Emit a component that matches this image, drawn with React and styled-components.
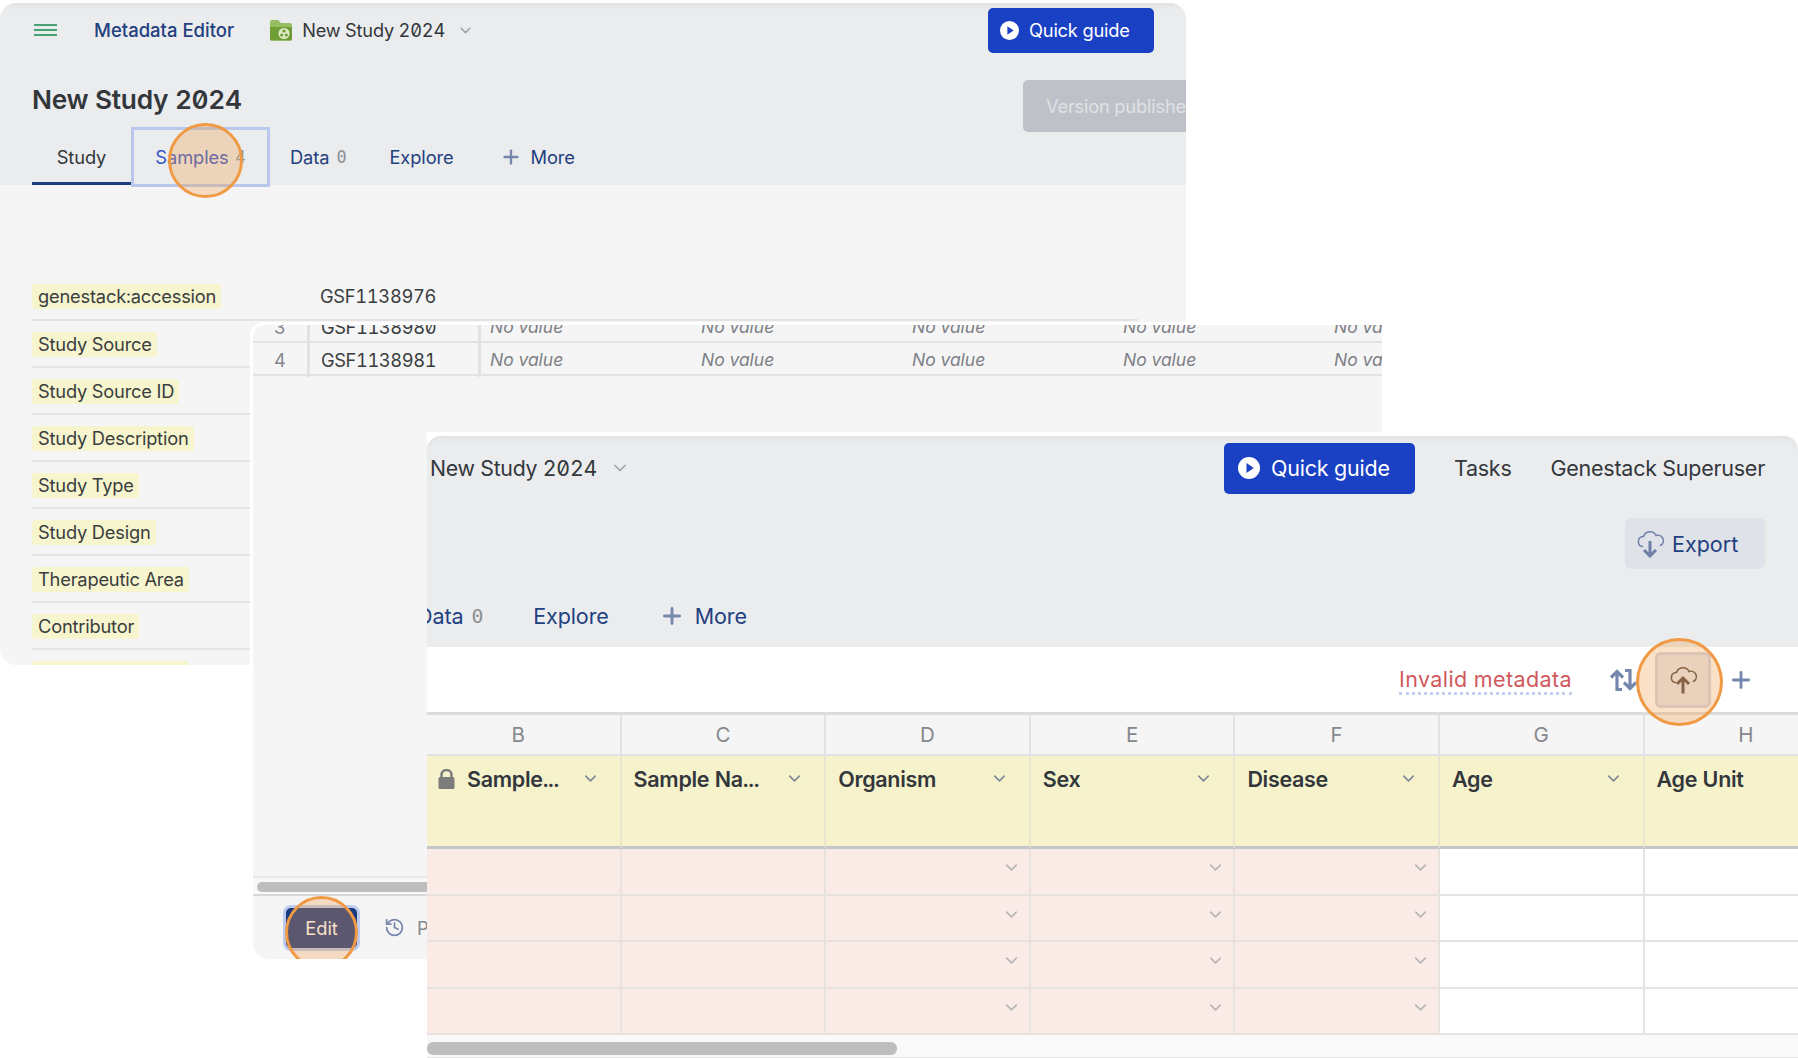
import React from "react";
import styled, { createGlobalStyle } from "styled-components";
import { ChevronDown, History, Plus } from "lucide-react";

const Global = createGlobalStyle`
  html, body { margin: 0; padding: 0; background: #fff; }
  body { font-family: "Inter", "Roboto", "Liberation Sans", sans-serif; font-feature-settings: "zero" 1, "tnum" 1; color: #33373c; }
  * { box-sizing: border-box; }
`;

const Desktop = styled.div`
  position: relative;
  width: 1798px;
  height: 1058px;
  overflow: hidden;
  background: #fff;
`;

/* Window 1: study page */
const StudyWindow = styled.section`
  position: absolute;
  left: 0;
  top: 3px;
  width: 1186px;
  height: 662px;
  border-radius: 16px;
  overflow: hidden;
  background: #f5f5f5;
  font-size: 18.3px;
`;
const GrayHeader = styled.header`
  display: flex;
  flex-direction: column;
  background: #ebecee;
  box-shadow: inset 0 7px 7px -5px rgba(0, 0, 0, 0.06);
  height: ${(p) => p.$h}px;
  flex-shrink: 0;
`;
const TopBar = styled.div`
  display: flex;
  align-items: center;
  height: 54px;
  padding: 0 32px 0 34px;
`;
const Burger = styled.div`
  display: flex;
  flex-direction: column;
  justify-content: space-between;
  width: 23px;
  height: 13px;
  margin-right: 37px;
  & > i { display: block; height: 2.4px; background: #46a275; }
`;
const AppName = styled.span`
  color: #23407f;
  font-weight: 500;
  font-size: 18.5px;
  margin-right: 35px;
`;
const StudyName = styled.span`
  color: #33373c;
  font-size: ${(p) => p.$size || 18.2}px;
  margin-left: ${(p) => p.$left || 9}px;
  letter-spacing: ${(p) => p.$track || -0.2}px;
`;
const Caret = styled(ChevronDown)`
  color: #9ea2a8;
  margin-left: ${(p) => p.$left || 12}px;
  flex-shrink: 0;
`;
const GuideButton = styled.button`
  display: flex;
  align-items: center;
  gap: ${(p) => p.$gap}px;
  margin-left: auto;
  width: ${(p) => p.$w}px;
  height: ${(p) => p.$h}px;
  padding: 0 0 0 ${(p) => p.$pad}px;
  background: #1a40c4;
  color: #fff;
  border: 0;
  border-radius: 5px;
  font: inherit;
  font-size: ${(p) => p.$size}px;
  letter-spacing: -0.2px;
`;
const TitleRow = styled.div`
  display: flex;
  justify-content: space-between;
  align-items: flex-start;
  height: 47px;
  margin-top: 23px;
  padding-left: 32px;
`;
const Title = styled.h1`
  margin: 0;
  font-size: 26.3px;
  line-height: 40px;
  font-weight: 600;
  color: #33373c;
  letter-spacing: -0.3px;
`;
const PublishedButton = styled.div`
  flex: 0 0 180px;
  height: 52px;
  margin-right: -17px;
  padding-left: 23px;
  line-height: 52px;
  background: #bec1c8;
  color: #dfe1e5;
  border-radius: 5px;
  font-size: 18.3px;
  white-space: nowrap;
  letter-spacing: -0.2px;
`;
const Tabs = styled.nav`
  display: flex;
  height: ${(p) => p.$h}px;
  margin-top: ${(p) => p.$top || 0}px;
  padding-left: ${(p) => p.$left}px;
  margin-left: ${(p) => p.$shift || 0}px;
  font-size: ${(p) => p.$size}px;
`;
const Tab = styled.div`
  position: relative;
  display: flex;
  align-items: center;
  gap: ${(p) => p.$gap || 7}px;
  justify-content: ${(p) => (p.$w ? "center" : "flex-start")};
  width: ${(p) => (p.$w ? p.$w + "px" : "auto")};
  padding: 2px ${(p) => p.$pad || 0}px 0;
  color: ${(p) => (p.$active ? "#33373c" : p.$focus ? "#3556c8" : "#23407f")};
  letter-spacing: -0.1px;
  ${(p) => p.$active && "box-shadow: inset 0 -3px 0 #1e3b82;"}
  ${(p) => p.$focus && "margin-bottom: -2px; padding-top: 0; outline: 3px solid #b9c8ec; outline-offset: -3px;"}
`;
const Count = styled.span`
  color: #8c8f94;
  font-family: "DejaVu Sans Mono", monospace;
  font-size: 0.92em;
`;
const RingSpot = styled.div`
  position: absolute;
  left: ${(p) => p.$x}px;
  top: ${(p) => p.$y}px;
  width: ${(p) => p.$w}px;
  height: ${(p) => p.$h}px;
  border: 3.5px solid #f09a45;
  border-radius: 50%;
  background: rgba(240, 154, 69, 0.3);
  pointer-events: none;
`;
const MetaList = styled.div`
  display: flex;
  flex-direction: column;
  padding: 99px 48px 0 32px;
`;
const MetaRow = styled.div`
  display: flex;
  align-items: flex-start;
  height: 47px;
  border-bottom: 2px solid #e4e4e4;
  flex-shrink: 0;
  &:first-child { height: 37px; }
`;
const Chip = styled.span`
  display: inline-block;
  height: 25px;
  line-height: 25px;
  padding: 0 5px 0 6px;
  background: #f7f5cd;
  border-radius: 3px;
  color: #3a3d40;
  font-size: 18.3px;
  letter-spacing: -0.2px;
`;
const MetaKey = styled.div`
  width: 288px;
  flex-shrink: 0;
  padding-top: ${(p) => p.$top}px;
`;
const MetaValue = styled.div`
  line-height: 25px;
  color: #3a3d40;
  letter-spacing: -0.3px;
  padding-top: ${(p) => p.$top}px;
`;

/* Window 2: samples table in read mode */
const SamplesWindow = styled.section`
  position: absolute;
  left: 250px;
  top: 322px;
  width: 1135px;
  height: 640px;
  border: 3px solid #fff;
  border-radius: 14px 0 0 18px;
  background: #fff;
  font-size: 17.5px;
`;
const SamplesInner = styled.div`
  display: flex;
  flex-direction: column;
  height: 100%;
  background: #f5f5f5;
  border-radius: 12px 0 0 16px;
  overflow: hidden;
`;
const SampleRow = styled.div`
  display: grid;
  grid-template-columns: 57px 171px repeat(5, 211px);
  height: 33px;
  flex-shrink: 0;
  border-bottom: 2px solid #e2e2e2;
  line-height: 34px;
  white-space: nowrap;
  &:first-child { margin-top: -15px; }
`;
const RowIndex = styled.div`
  text-align: center;
  color: #85888c;
  font-size: 18.3px;
  border-right: 3px solid #e2e2e2;
`;
const RowId = styled.div`
  padding-left: 11px;
  color: #3a3d40;
  font-size: 18.3px;
  letter-spacing: -0.4px;
  border-right: 3px solid #e2e2e2;
`;
const NoValue = styled.div`
  padding-left: 9px;
  font-style: italic;
  color: #7d8085;
`;
const TableSpace = styled.div`
  flex: 1;
`;
const ScrollTrack = styled.div`
  flex-shrink: 0;
  height: ${(p) => p.$h}px;
  padding: ${(p) => p.$padY}px 0 0 ${(p) => p.$padX}px;
  background: ${(p) => p.$bg};
  border-top: ${(p) => p.$line};
  border-bottom: ${(p) => p.$line2};
`;
const ScrollThumb = styled.div`
  width: ${(p) => p.$w}px;
  height: ${(p) => p.$h}px;
  border-radius: 6px;
  background: #bebebe;
`;
const SamplesFooter = styled.footer`
  position: relative;
  flex-shrink: 0;
  display: flex;
  align-items: center;
  height: 63px;
  padding-left: 33px;
  overflow: hidden;
`;
const EditButton = styled.div`
  width: 71px;
  height: 40px;
  line-height: 40px;
  text-align: center;
  border-radius: 5px;
  background: #1c3a80;
  color: #fff;
  font-size: 18.3px;
  box-shadow: 0 0 0 3px #bccbef;
`;
const PastLink = styled.div`
  display: flex;
  align-items: center;
  gap: 12px;
  margin-left: 27px;
  color: #85888c;
  font-size: 18.3px;
  white-space: nowrap;
`;

/* Window 3: samples table in edit mode */
const EditorWindow = styled.section`
  position: absolute;
  left: 427px;
  top: 432px;
  width: 1371px;
  height: 626px;
  padding-top: 4px;
  background: #fff;
  overflow: hidden;
  font-size: 21.5px;
`;
const RoundHeader = styled(GrayHeader)`
  border-radius: 14px 14px 0 0;
`;
const EditorTop = styled.div`
  display: flex;
  align-items: center;
  height: 64px;
  padding-right: 33px;
`;
const HeadLink = styled.span`
  margin-left: ${(p) => p.$left}px;
  color: #33373c;
  white-space: nowrap;
  letter-spacing: -0.25px;
`;
const ExportRow = styled.div`
  display: flex;
  justify-content: flex-end;
  margin-top: 18px;
  padding-right: 33px;
`;
const ExportButton = styled.div`
  display: flex;
  align-items: center;
  gap: 8px;
  width: 140px;
  height: 51px;
  padding-left: 11px;
  border-radius: 6px;
  background: #dfe2e8;
  color: #23407f;
`;
const Toolbar = styled.div`
  position: relative;
  display: flex;
  align-items: center;
  justify-content: flex-end;
  height: 65px;
  padding-right: 44px;
`;
const InvalidLink = styled.span`
  color: #d0585c;
  line-height: 26px;
  letter-spacing: 0.4px;
  border-bottom: 3px dotted #c3cdf0;
  margin: 2px 37px 0 0;
`;
const ToolSlot = styled.div`
  display: flex;
  align-items: center;
  justify-content: center;
  width: ${(p) => p.$w}px;
  height: ${(p) => p.$h || 56}px;
`;
const UploadSlot = styled(ToolSlot)`
  margin: 0 17px 0 17px;
  background: #e7e9ee;
  border: 3px solid #d5d6e6;
  border-radius: 6px;
`;
const GridClip = styled.div`
  overflow: hidden;
  border-top: 3px solid #dcdcdc;
`;
const SheetGrid = styled.div`
  display: grid;
  grid-template-columns: repeat(7, 204.6px);
  grid-template-rows: 41px 93px repeat(4, 46.6px);
  margin-left: -10px;
  width: 1432.2px;
`;
const LetterCell = styled.div`
  display: flex;
  align-items: center;
  justify-content: center;
  background: #f5f5f5;
  color: #85888c;
  border-right: 2px solid #e3e3e3;
  border-bottom: 2px solid #e3e3e3;
  font-size: 20.5px;
`;
const HeadCell = styled.div`
  display: flex;
  align-items: flex-start;
  padding: 9px 14px 0 12px;
  background: #f6f3cc;
  border-right: 2px solid #e6e6d0;
  border-bottom: 3px solid #c5c6cb;
  font-weight: 600;
  line-height: 28px;
  color: #33373c;
  letter-spacing: -0.3px;
  white-space: nowrap;
`;
const HeadLabel = styled.span`
  flex: 1;
  min-width: 0;
  overflow: hidden;
  text-overflow: ellipsis;
`;
const HeadCaret = styled(ChevronDown)`
  color: #7f8796;
  flex-shrink: 0;
  margin: 4px 6px 0 6px;
`;
const DataCell = styled.div`
  display: flex;
  justify-content: flex-end;
  padding: 9px 8px 0 0;
  background: ${(p) => (p.$bad ? "#fbebe7" : "#fff")};
  border-right: 2px solid ${(p) => (p.$bad ? "#e8e2df" : "#e4e4e4")};
  border-bottom: 2px solid ${(p) => (p.$bad ? "#e8e2df" : "#e4e4e4")};
`;
const CellCaret = styled(ChevronDown)`
  color: #b5b5b5;
`;
const LockIcon = styled.svg`
  flex-shrink: 0;
  margin: 4px 12px 0 9px;
`;

const PlayCircle = ({ size }) => (
  <svg width={size} height={size} viewBox="0 0 24 24">
    <circle cx="12" cy="12" r="12" fill="#fff" />
    <path d="M9.3 6.6 L17.2 12 L9.3 17.4 Z" fill="#1a40c4" />
  </svg>
);
const FolderIcon = () => (
  <svg width="24" height="22" viewBox="0 0 24 22">
    <path d="M1 3 Q1 1 3 1 H9 L12 4 H21 Q23 4 23 6 V20 Q23 21.500 21.500 21.500 H2.500 Q1 21.500 1 20 Z" fill="#97bd62" />
    <path d="M1 8 H23 V20 Q23 21.500 21.500 21.500 H2.500 Q1 21.500 1 20 Z" fill="#6f9e37" />
    <circle cx="15" cy="14.500" r="5.500" fill="#dfe9c6" />
    <circle cx="15" cy="12" r="1.600" fill="#6f9e37" />
    <circle cx="12.700" cy="16" r="1.600" fill="#6f9e37" />
    <circle cx="17.300" cy="16" r="1.600" fill="#6f9e37" />
  </svg>
);
const CloudArrow = ({ up, color, arrow, size }) => (
  <svg width={size} height={size} viewBox="0 0 28 28" fill="none">
    <path
      d="M6.500 16.500 A4.200 4.200 0 0 1 2.500 11.500 A4.500 4.500 0 0 1 7.500 6.500 A6.800 6.800 0 0 1 20 5.500 A5.500 5.500 0 0 1 24.500 15.500"
      stroke={color}
      strokeWidth="1.500"
      strokeLinecap="round"
    />
    {up ? (
      <path d="M14 27.500 V12 M8 18 L14 12 L20 18" stroke={arrow} strokeWidth="3" />
    ) : (
      <path d="M14 11 V26 M8 20 L14 26 L20 20" stroke={arrow} strokeWidth="3" />
    )}
  </svg>
);
const SwapIcon = () => (
  <svg width="29" height="24" viewBox="0 0 29 24" fill="none" stroke="#7686ad" strokeWidth="3.200">
    <path d="M13 21.500 H8 V4 M2 9.500 L8 3.500 L14 9.500" />
    <path d="M16 2.500 H21 V20 M15 14.500 L21 20.500 L27 14.500" />
  </svg>
);

const fields = [
  ["Study Source"],
  ["Study Source ID"],
  ["Study Description"],
  ["Study Type"],
  ["Study Design"],
  ["Therapeutic Area"],
  ["Contributor"],
  ["Contributor Email"],
];
const letters = ["B", "C", "D", "E", "F", "G", "H"];
const heads = ["Sample...", "Sample Na...", "Organism", "Sex", "Disease", "Age", "Age Unit"];
const dropCols = [false, false, true, true, true, false, false];
const badCols = [true, true, true, true, true, false, false];

export default function App() {
  return (
    <Desktop>
      <Global />
      <StudyWindow>
        <GrayHeader $h={182}>
          <TopBar>
            <Burger><i /><i /><i /></Burger>
            <AppName>Metadata Editor</AppName>
            <FolderIcon />
            <StudyName>New Study 2024</StudyName>
            <Caret size={17} />
            <GuideButton $w={166} $h={45} $pad={12} $gap={10} $size={18.3}>
              <PlayCircle size={19} />
              Quick guide
            </GuideButton>
          </TopBar>
          <TitleRow>
            <Title>New Study 2024</Title>
            <PublishedButton>Version published</PublishedButton>
          </TitleRow>
          <Tabs $h={58} $left={32} $size={18.3}>
            <Tab $active $w={99}>Study</Tab>
            <Tab $focus $w={139}>Samples <Count>4</Count></Tab>
            <Tab $pad={20}>Data <Count>0</Count></Tab>
            <Tab $pad={23}>Explore</Tab>
            <Tab $pad={23} $gap={9}><Plus size={22} strokeWidth={2.6} color="#7686ad" />More</Tab>
          </Tabs>
        </GrayHeader>
        <RingSpot $x={168} $y={120} $w={75} $h={75} />
        <MetaList>
          <MetaRow>
            <MetaKey $top={0}><Chip>genestack:accession</Chip></MetaKey>
            <MetaValue $top={0}>GSF1138976</MetaValue>
          </MetaRow>
          {fields.map(([f]) => (
            <MetaRow key={f}>
              <MetaKey $top={11}><Chip>{f}</Chip></MetaKey>
            </MetaRow>
          ))}
        </MetaList>
      </StudyWindow>

      <SamplesWindow>
        <SamplesInner>
          {[["3", "GSF1138980"], ["4", "GSF1138981"]].map(([n, id]) => (
            <SampleRow key={n}>
              <RowIndex>{n}</RowIndex>
              <RowId>{id}</RowId>
              {[0, 1, 2, 3, 4].map((i) => <NoValue key={i}>No value</NoValue>)}
            </SampleRow>
          ))}
          <TableSpace />
          <ScrollTrack $h={20} $padY={4} $padX={4} $bg="#f8f8f8" $line="2px solid #e8e8e8" $line2="2px solid #d8d8d8">
            <ScrollThumb $w={400} $h={10} />
          </ScrollTrack>
          <SamplesFooter>
            <EditButton>Edit</EditButton>
            <PastLink><History size={21} color="#7686ad" />Previous versions</PastLink>
            <RingSpot $x={32} $y={0} $w={73} $h={73} />
          </SamplesFooter>
        </SamplesInner>
      </SamplesWindow>

      <EditorWindow>
        <RoundHeader $h={211}>
          <EditorTop>
            <StudyName $size={21.3} $left={3} $track={-0.25}>New Study 2024</StudyName>
            <Caret size={20} $left={13} />
            <GuideButton $w={191} $h={51} $pad={14} $gap={11} $size={21.5}>
              <PlayCircle size={22} />
              Quick guide
            </GuideButton>
            <HeadLink $left={39}>Tasks</HeadLink>
            <HeadLink $left={39}>Genestack Superuser</HeadLink>
          </EditorTop>
          <ExportRow>
            <ExportButton>
              <CloudArrow size={28} color="#6f7fa8" arrow="#6f7fa8" />
              Export
            </ExportButton>
          </ExportRow>
          <Tabs $h={64} $left={0} $shift={-10} $size={21.5} $top={14}>
            <Tab $gap={8}>Data <Count>0</Count></Tab>
            <Tab $pad={50}>Explore</Tab>
            <Tab $gap={10}><Plus size={26} strokeWidth={2.6} color="#7686ad" />More</Tab>
          </Tabs>
        </RoundHeader>
        <Toolbar>
          <InvalidLink>Invalid metadata</InvalidLink>
          <SwapIcon />
          <UploadSlot $w={56}><CloudArrow up size={28} color="#5a4b45" arrow="#5a4b45" /></UploadSlot>
          <Plus size={26} strokeWidth={2.6} color="#7686ad" />
          <RingSpot $x={1209} $y={-9} $w={87} $h={88} />
        </Toolbar>
        <GridClip>
          <SheetGrid>
            {letters.map((l) => <LetterCell key={l}>{l}</LetterCell>)}
            {heads.map((h, i) => (
              <HeadCell key={h}>
                {i === 0 && (
                  <LockIcon width="17" height="20" viewBox="0 0 17 20">
                    <path d="M3.500 9 V6 A5 5 0 0 1 13.500 6 V9" fill="none" stroke="#7c7c7c" strokeWidth="2.400" />
                    <rect x="0.500" y="8" width="16" height="12" rx="1.500" fill="#7c7c7c" />
                  </LockIcon>
                )}
                <HeadLabel>{h}</HeadLabel>
                {i < 6 && <HeadCaret size={19} />}
              </HeadCell>
            ))}
            {[0, 1, 2, 3].map((r) =>
              letters.map((l, c) => (
                <DataCell key={l + r} $bad={badCols[c]}>
                  {dropCols[c] && <CellCaret size={19} />}
                </DataCell>
              ))
            )}
          </SheetGrid>
        </GridClip>
        <ScrollTrack $h={22.6} $padY={7} $padX={0} $bg="#f9f9f9" $line="0" $line2="1px solid #e6e6e6">
          <ScrollThumb $w={470} $h={13} />
        </ScrollTrack>
      </EditorWindow>
    </Desktop>
  );
}
